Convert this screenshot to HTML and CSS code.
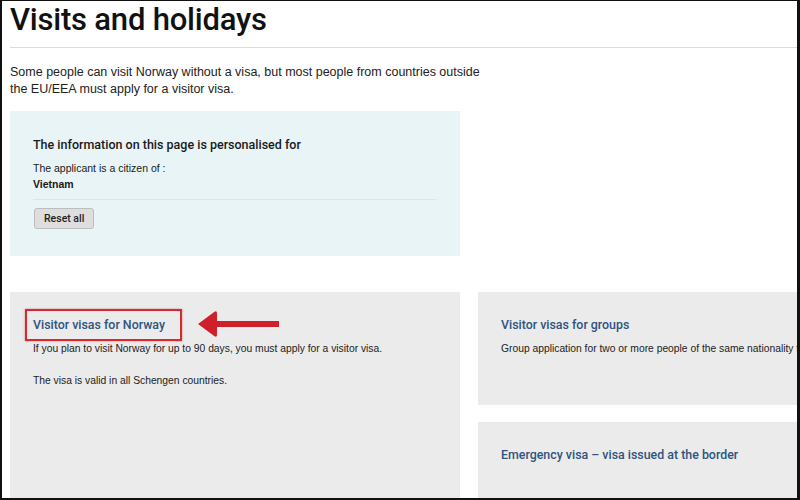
FILE: index.html
```html
<!DOCTYPE html>
<html lang="en">

<head>
    <meta charset="UTF-8">
    <meta name="viewport" content="width=device-width, initial-scale=1.0">
    <title>Visits and holidays</title>
    <link rel="stylesheet" href="styles.css">
</head>

<body>
    <div class="shot-frame">
        <main class="page">
            <h1 class="page-title">Visits and holidays</h1>
            <p class="page-intro">Some people can visit Norway without a visa, but most people from countries outside<br>
                the EU/EEA must apply for a visitor visa.</p>

            <section class="personal-box">
                <h2 class="personal-title">The information on this page is personalised for</h2>
                <p class="personal-label">The applicant is a citizen of :</p>
                <p class="personal-value">Vietnam</p>
                <div class="personal-actions">
                    <button class="reset-btn" type="button">Reset all</button>
                </div>
            </section>

            <div class="card-grid">
                <article class="card card-tall">
                    <div class="card-head">
                        <a class="card-link marked" href="#">Visitor visas for Norway</a>
                        <svg class="pointer-arrow" width="82" height="28" viewBox="0 0 82 28" aria-hidden="true">
                            <path d="M1 14 L17.5 1.8 Q20 0.3 20 3.5 L20 11 L82 11 L82 17 L20 17 L20 24.5 Q20 27.7 17.5 26.2 Z" fill="#cf1f2b" />
                        </svg>
                    </div>
                    <p class="card-text">If you plan to visit Norway for up to 90 days, you must apply for a visitor visa.</p>
                    <p class="card-text">The visa is valid in all Schengen countries.</p>
                </article>

                <div class="card-stack">
                    <article class="card card-mid">
                        <div class="card-head">
                            <a class="card-link" href="#">Visitor visas for groups</a>
                        </div>
                        <p class="card-text nowrap">Group application for two or more people of the same nationality travelling together.</p>
                    </article>
                    <article class="card card-low">
                        <div class="card-head">
                            <a class="card-link" href="#">Emergency visa – visa issued at the border</a>
                        </div>
                    </article>
                </div>
            </div>
        </main>
    </div>
</body>

</html>
```

FILE: styles.css
```css
html,
body {
    margin: 0;
    padding: 0;
    background: #fff;
}

.shot-frame {
    box-sizing: border-box;
    width: 800px;
    height: 500px;
    overflow: hidden;
    border-style: solid;
    border-color: #111;
    border-width: 1px 3px 2px 2px;
}

.page {
    width: 918px;
    padding-left: 8px;
    font-family: "Liberation Sans", Arial, sans-serif;
    color: #1a1a1a;
}

/* heading in the DIN-like site font */
.page-title {
    margin: 0;
    padding: 0 0 9px 0;
    font-family: Roboto, "DejaVu Sans", sans-serif;
    font-weight: 500;
    font-size: 31px;
    line-height: 37px;
    letter-spacing: -0.2px;
    color: #111;
    border-bottom: 1px solid #dcdcdc;
}

.page-intro {
    margin: 16px 0 0 0;
    font-size: 12.5px;
    line-height: 17px;
    color: #222;
}

.personal-box {
    box-sizing: border-box;
    width: 450px;
    margin-top: 13px;
    padding: 25px 24px 27px 23px;
    background: #e9f4f7;
}

.personal-title {
    margin: 0 0 7px 0;
    font-family: Roboto, "DejaVu Sans", sans-serif;
    font-weight: 500;
    font-size: 12.5px;
    line-height: 17px;
    color: #1a1a1a;
}

.personal-label,
.personal-value {
    margin: 0;
    font-size: 10.5px;
    line-height: 16px;
}

.personal-value {
    font-weight: bold;
}

.personal-actions {
    margin-top: 7px;
    padding-top: 8px;
    border-top: 1px solid #d6e8ed;
}

.reset-btn {
    display: block;
    height: 21px;
    padding: 0 9px;
    margin-left: 1px;
    font-family: Roboto, "DejaVu Sans", sans-serif;
    font-weight: 500;
    font-size: 10.5px;
    color: #222;
    background: #dedede;
    border: 1px solid #bdbdbd;
    border-radius: 3px;
}

.card-grid {
    display: grid;
    grid-template-columns: 450px 450px;
    column-gap: 18px;
    margin-top: 36px;
}

.card {
    box-sizing: border-box;
    padding: 17px 23px 0 23px;
    background: #ebebeb;
}

.card-tall {
    height: 220px;
}

.card-stack {
    display: flex;
    flex-direction: column;
    gap: 17px;
}

.card-mid {
    height: 113px;
}

.card-low {
    height: 100px;
}

.card-head {
    display: flex;
    align-items: center;
    height: 32px;
}

.card-link {
    font-family: Roboto, "DejaVu Sans", sans-serif;
    font-weight: 500;
    font-size: 12.4px;
    line-height: 16px;
    color: #2f5480;
    text-decoration: none;
}

/* red highlight added on the screenshot */
.card-link.marked {
    margin-left: -8px;
    padding: 6px 15px 6px 6px;
    border: 2px solid #d42a30;
    box-shadow: 0 0 2px rgba(212, 42, 48, 0.5);
}

.pointer-arrow {
    margin-left: 15px;
    margin-top: -2px;
}

.card-text {
    margin: 0 0 16px 0;
    font-size: 10.3px;
    line-height: 16px;
    color: #222;
}

.nowrap {
    white-space: nowrap;
}
```
